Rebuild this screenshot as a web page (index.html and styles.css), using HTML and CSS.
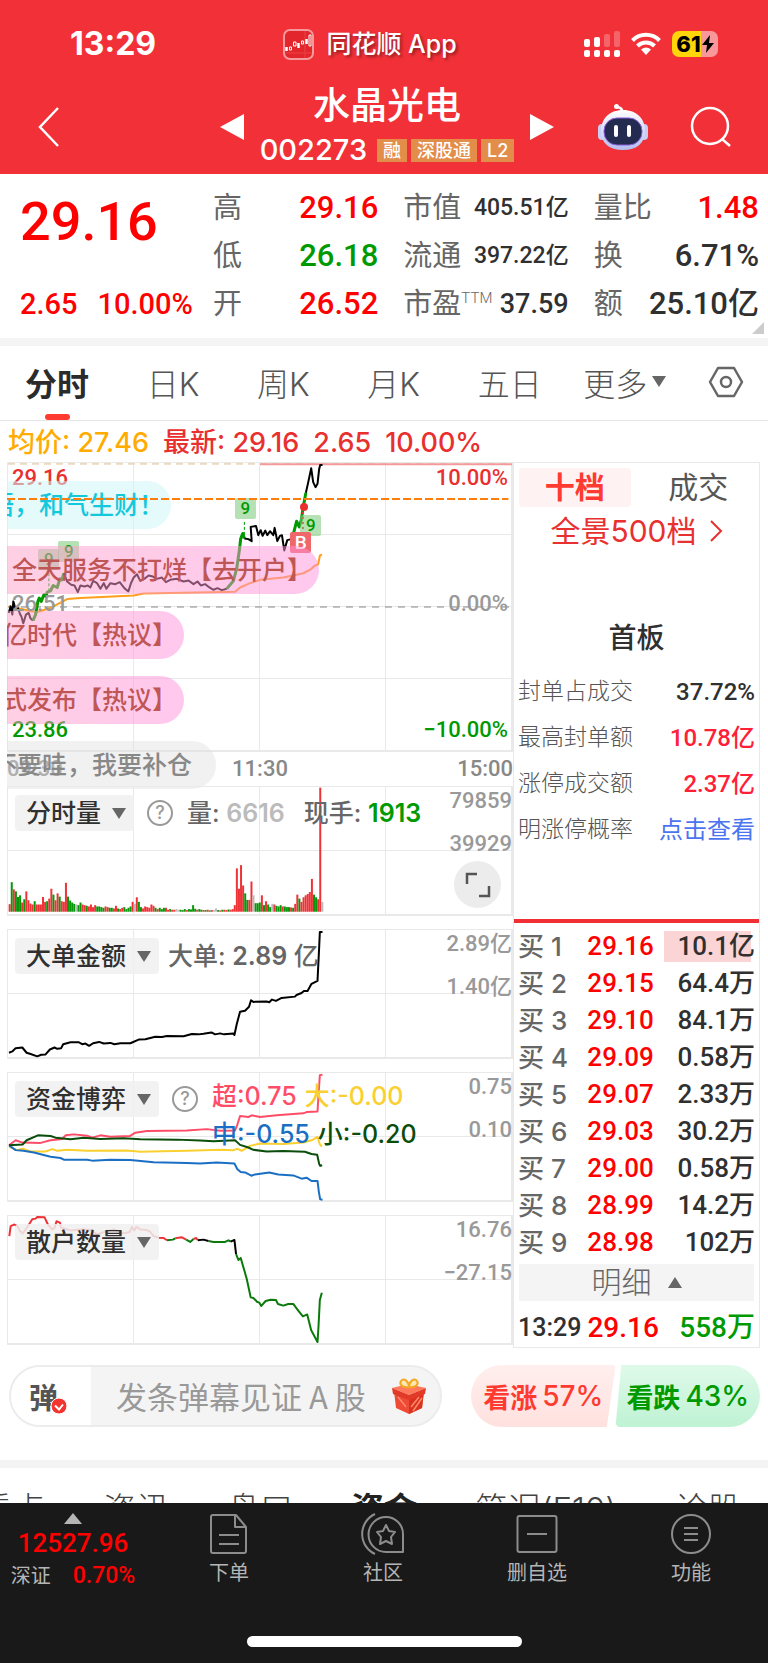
FILE: index.html
```html
<!DOCTYPE html>
<html lang="zh-CN">
<head>
    <meta charset="UTF-8">
    <meta name="viewport" content="width=device-width, initial-scale=1.0">
    <title>水晶光电 002273</title>
    <link rel="stylesheet" href="styles.css">
</head>
<body>

<header class="header">
    <div class="status">
        <span class="clock">13:29</span>
        <div class="app-name">
            <svg width="31" height="31" viewBox="0 0 31 31" fill="none" stroke="#fff">
                <rect x="1" y="1" width="29" height="29" rx="6" fill="#e3262c" stroke="#f59a9c" stroke-width="2"/>
                <path d="M2 24h27M22 2v27" stroke="#ea4448" stroke-width="1"/>
                <path d="M3.500 18v4M15.500 14v5M23.500 10v5" stroke-width="2.500"/>
                <path d="M6.500 18h2v3h-2zM10.500 13h2.500v4h-2.500zM18.500 12h2v3h-2zM26 6h2v11h-2z" stroke-width="1"/>
            </svg>
            <span>同花顺 App</span>
        </div>
        <div class="status-icons">
            <svg width="36" height="26" viewBox="0 0 36 26" fill="#fff">
                <rect x="0" y="8" width="6" height="8" rx="2"/><rect x="10" y="6" width="6" height="10" rx="2"/>
                <g opacity=".25"><rect x="20" y="3" width="6" height="13" rx="2"/><rect x="30" y="0" width="6" height="16" rx="2"/></g>
                <rect x="0" y="19" width="6" height="7" rx="2"/><rect x="10" y="19" width="6" height="7" rx="2"/><rect x="20" y="19" width="6" height="7" rx="2"/><rect x="30" y="19" width="6" height="7" rx="2"/>
            </svg>
            <svg width="30" height="24" viewBox="0 0 30 24" fill="none" stroke="#fff" stroke-width="4">
                <path d="M1.500 8.500a19 19 0 0 1 27 0M6.500 14a12 12 0 0 1 17 0"/>
                <path d="M10 17.500q5-4 10 0L15 23z" fill="#fff" stroke="none"/>
            </svg>
            <div class="battery">61<svg width="12" height="18" viewBox="0 0 12 18"><path d="M8 0L0 10h5L4 18l8-10H7z" fill="#000"/></svg></div>
        </div>
    </div>
    <div class="title-bar">
        <button class="icon-button" aria-label="返回">
            <svg width="22" height="40" viewBox="0 0 22 40" fill="none" stroke="#fff" stroke-width="2.500"><path d="M20 1L2 20l18 19"/></svg>
        </button>
        <button class="icon-button prev" aria-label="上一只">
            <svg width="24" height="26" viewBox="0 0 24 26" fill="#fff"><path d="M0 13L24 0v26z"/></svg>
        </button>
        <div class="stock">
            <h1>水晶光电</h1>
            <div class="stock-code">
                <span>002273</span>
                <em>融</em><em>深股通</em><em>L2</em>
            </div>
        </div>
        <button class="icon-button next" aria-label="下一只">
            <svg width="24" height="26" viewBox="0 0 24 26" fill="#fff"><path d="M24 13L0 0v26z"/></svg>
        </button>
        <button class="icon-button robot" aria-label="助手">
            <svg width="50" height="48" viewBox="0 0 50 48">
                <defs>
                    <linearGradient id="shell" x1="0" y1="0" x2="0" y2="1"><stop offset="0" stop-color="#fff"/><stop offset="1" stop-color="#b4bdf0"/></linearGradient>
                </defs>
                <path d="M24 9q1-4-5-5" fill="none" stroke="#fff" stroke-width="2.500" stroke-linecap="round"/>
                <circle cx="18.500" cy="3.500" r="2.500" fill="#fff"/>
                <rect x="0" y="21" width="8" height="16" rx="4" fill="#c9cef5"/><rect x="42" y="21" width="8" height="16" rx="4" fill="#c9cef5"/>
                <path d="M25 7C39 7 47 16 47 28c0 12-8 19-22 19S3 40 3 28C3 16 11 7 25 7z" fill="url(#shell)"/>
                <rect x="6" y="15" width="38" height="27" rx="13" fill="#232c50" stroke="#8a5bd8" stroke-width="1"/>
                <rect x="16" y="22" width="4" height="12" rx="2" fill="#fff"/><rect x="29" y="22" width="4" height="12" rx="2" fill="#fff"/>
            </svg>
        </button>
        <button class="icon-button" aria-label="搜索">
            <svg width="42" height="42" viewBox="0 0 42 42" fill="none" stroke="#fff" stroke-width="2.500"><circle cx="20" cy="20" r="18"/><path d="M32 33l8 7"/></svg>
        </button>
    </div>
</header>

<section class="quote">
    <div class="price-box">
        <strong class="red">29.16</strong>
        <p class="red"><span>2.65</span><span>10.00%</span></p>
    </div>
    <dl>
        <div><dt>高</dt><dd class="red">29.16</dd></div>
        <div><dt>低</dt><dd class="green">26.18</dd></div>
        <div><dt>开</dt><dd class="red">26.52</dd></div>
    </dl>
    <dl>
        <div><dt>市值</dt><dd class="small">405.51亿</dd></div>
        <div><dt>流通</dt><dd class="small">397.22亿</dd></div>
        <div><dt>市盈<sup>TTM</sup></dt><dd class="mid">37.59</dd></div>
    </dl>
    <dl>
        <div><dt>量比</dt><dd class="red">1.48</dd></div>
        <div><dt>换</dt><dd>6.71%</dd></div>
        <div><dt>额</dt><dd>25.10亿</dd></div>
    </dl>
</section>

<nav class="tabs">
    <button class="active">分时</button>
    <button>日K</button>
    <button>周K</button>
    <button>月K</button>
    <button>五日</button>
    <button class="more">更多<i class="down"></i></button>
    <button class="settings" aria-label="设置">
        <svg width="36" height="32" viewBox="0 0 36 32" fill="none" stroke="#666" stroke-width="2.500"><path d="M10 2h16l8 14-8 14H10L2 16z" stroke-linejoin="round"/><circle cx="18" cy="16" r="5"/></svg>
    </button>
</nav>

<p class="latest"><span class="avg">均价: 27.46</span><span>最新: 29.16</span><span>2.65</span><span>10.00%</span></p>

<main class="board">
    <div class="charts">
        <div class="minute">
            <div class="grid grid-main">
                <svg class="plot" viewBox="22 22 1516 870" preserveAspectRatio="none">
                    <path class="dash-tan" d="M22 24H1538"/>
                    <path class="limit" d="M780 26H1538"/>
                    <path class="dash-grey" d="M22 457H1538"/>
                    <path class="avg-line" d="M24 455L60 462 90 470 110 472 150 460 200 433 240 430 400 422 430 416 550 414 705 411 720 398 750 385 780 375 850 368 880 362 910 355 930 345 945 332 955 328 960 302 966 298"/>
                    <path class="black" d="M24 475L30 455 35 480 38 440 45 465 52 460 58 478 62 485 68 506 76 480 84 475 90 492 97 498"/>
                    <path class="rise" d="M97 498L105 480 112 440 116 430 122 440 130 420 136 425 140 412 150 408 158 392 170 398 178 372 184 375 190 355"/>
                    <path class="black" d="M190 355L200 380 212 390 222 392 232 412 240 392 252 395 262 392 270 398 278 378 290 385 300 402 310 385 318 402 330 385 345 388 358 382 372 400 384 410 392 385 400 368 410 358 420 378 432 372 445 362 458 365 470 372 485 368 497 382 510 375 530 372 550 380 565 377 580 388 592 380 602 392 615 388 628 398 640 405 652 400 665 406 680 402"/>
                    <path class="rise" d="M680 402L700 378 710 340 718 285 722 250 728 235 733 250"/>
                    <path class="black" d="M733 250L745 252 755 258 752 215 768 212 775 240 782 225 788 242 796 226 802 240 810 228 820 240 824 218 832 258 840 242 846 240 853 286 862 255 874 252"/>
                    <path class="rise" d="M874 250L882 230 890 198 898 215 904 195 910 155 918 112"/>
                    <path class="black" d="M918 112L924 85 934 38 940 80 947 95 953 85 958 40 961 28 968 28"/>
                    <path class="stem" d="M145 340V415M733 200V240"/>
                    <path class="stem-red" d="M909 155V225"/>
                </svg>
                <b class="tag tag-a">9</b>
                <b class="tag tag-b">9</b>
                <b class="tag tag-c">9</b>
                <b class="tag tag-d">9</b>
                <b class="tag tag-buy">B</b>
                <i class="dot"></i>
                <div class="axis">
                    <p class="up"><span>29.16</span><span>10.00%</span></p>
                    <p><span>26.51</span><span>0.00%</span></p>
                    <p class="fall"><span>23.86</span><span>−10.00%</span></p>
                </div>
            </div>
            <div class="times"><span>09:30</span><span>11:30</span><span>15:00</span></div>
            <div class="danmu">
                <p class="cyan trim">语，和气生财！</p>
                <p class="trim long">全天服务不打烊【去开户】</p>
                <p class="trim">亿时代【热议】</p>
                <p class="trim">式发布【热议】</p>
                <p class="grey">不要哇，我要补仓</p>
            </div>
            <svg class="plot warn" viewBox="22 22 1516 870" preserveAspectRatio="none"><path class="dash-orange" d="M22 133H1524"/></svg>
        </div>

        <div class="grid panel">
            <svg class="plot" id="volume" viewBox="22 18 1516 390" preserveAspectRatio="none"></svg>
            <div class="legend">
                <button class="picker">分时量<i class="down"></i></button>
                <button class="help" aria-label="说明">?</button>
                <span class="wide">量: <b class="faint">6616</b></span>
                <span>现手: <b class="green">1913</b></span>
            </div>
            <div class="scale"><span>79859</span><span>39929</span></div>
            <button class="expand" aria-label="放大">
                <svg width="26" height="26" viewBox="0 0 26 26" fill="none" stroke="#555" stroke-width="2.500"><path d="M2 12V2h10M24 14v10H14"/></svg>
            </button>
        </div>

        <div class="grid panel">
            <svg class="plot" viewBox="22 448 1516 390" preserveAspectRatio="none">
                <path class="black" d="M25 822L35 818 45 808 65 806 78 822 90 826 110 833 122 828 135 827 148 812 162 806 170 810 182 808 188 796 210 790 235 790 245 796 255 794 266 801 278 793 296 789 310 794 330 792 342 796 360 793 390 793 415 782 435 781 465 773 485 774 500 771 550 772 575 765 595 766 610 764 634 760 645 766 660 763 672 766 700 763 703 768 710 735 720 697 735 694 747 682 753 662 760 667 800 666 808 668 816 660 828 664 845 655 885 651 890 646 905 640 912 634 923 634 935 612 953 603 958 500 960 454 968 454"/>
            </svg>
            <div class="legend">
                <button class="picker">大单金额<i class="down"></i></button>
                <span>大单: <b>2.89</b> 亿</span>
            </div>
            <div class="scale"><span>2.89亿</span><span>1.40亿</span></div>
        </div>

        <div class="grid panel">
            <svg class="plot" viewBox="22 23 1516 390" preserveAspectRatio="none">
                <path class="huge" d="M25 243L45 228 65 235 120 236 150 228 185 224 195 213 220 210 260 214 275 220 300 213 330 217 388 215 405 205 440 200 560 198 620 194 660 199 705 198 712 180 720 154 745 157 755 152 780 157 830 152 910 146 920 142 953 140 956 90 960 30 968 28"/>
                <path class="big" d="M25 248L50 258 66 254 90 262 135 262 155 255 170 260 200 257 260 260 380 259 420 263 560 260 660 257 700 258 712 254 725 260 750 245 780 238 850 239 910 235 935 228 953 218 960 240 966 247"/>
                <path class="medium" d="M25 243L45 258 68 260 100 265 150 278 180 282 190 287 260 287 275 290 330 287 390 288 460 295 560 297 600 299 650 296 703 299 712 316 722 325 735 326 754 336 765 332 808 326 835 332 880 335 905 345 920 342 935 352 953 352 957 385 961 408 968 409"/>
                <path class="little" d="M25 243L66 241 78 228 112 213 150 215 165 220 210 225 250 220 300 224 370 222 420 225 530 226 600 229 640 231 705 228 720 242 745 250 760 257 800 262 850 261 915 263 935 270 952 272 958 300 961 306 967 304"/>
            </svg>
            <div class="legend">
                <button class="picker">资金博弈<i class="down"></i></button>
                <button class="help" aria-label="说明">?</button>
                <div class="flows">
                    <p><span class="c-huge">超:0.75</span><span class="c-big">大:-0.00</span></p>
                    <p><span class="c-medium">中:-0.55</span><span class="c-little">小:-0.20</span></p>
                </div>
            </div>
            <div class="scale"><span>0.75</span><span>0.10</span></div>
        </div>

        <div class="grid panel">
            <svg class="plot" viewBox="22 454 1516 390" preserveAspectRatio="none">
                <path class="retail-up" d="M26 515L30 485 40 480 50 484 58 500 67 507 75 495 85 480 95 464 105 462 110 457 132 458 142 480 155 495 162 490 168 470 178 474 182 490 210 498 240 495 270 497 290 510 320 500 340 495 370 507 388 503 395 487 402 498 408 487 420 495 435 496 448 500 460 515 475 520 490 521 500 528"/>
                <path class="retail-down" d="M500 528L518 526 525 522M558 526L570 533 580 524M625 530L640 533 675 533 685 528 692 532"/>
                <path class="retail-up" d="M525 522L545 519 558 526M580 524L588 521 593 528"/>
                <path class="black" d="M593 528L610 526 625 530M692 532L703 527 708 570"/>
                <path class="retail-down" d="M708 570L715 588 722 582 740 645 752 702 760 704 772 716 778 718 784 728 797 713 812 709 828 710 834 722 850 727 865 722 880 722 895 742 909 760 922 754 934 802 953 838 956 790 960 710 966 688"/>
            </svg>
            <div class="legend">
                <button class="picker">散户数量<i class="down"></i></button>
            </div>
            <div class="scale"><span>16.76</span><span>−27.15</span></div>
        </div>
    </div>

    <aside class="orders">
        <div class="order-tabs"><button class="active">十档</button><button>成交</button></div>
        <a class="full-depth" href="#">全景500档
            <svg width="14" height="22" viewBox="0 0 14 22" fill="none" stroke="#e93030" stroke-width="2"><path d="M2 1l10 10L2 21"/></svg>
        </a>
        <h2>首板</h2>
        <dl class="facts">
            <div><dt>封单占成交</dt><dd>37.72%</dd></div>
            <div><dt>最高封单额</dt><dd class="rose">10.78亿</dd></div>
            <div><dt>涨停成交额</dt><dd class="rose">2.37亿</dd></div>
            <div><dt>明涨停概率</dt><dd><a href="#">点击查看</a></dd></div>
        </dl>
        <table class="bids">
            <tr><th>买 1</th><td class="red">29.16</td><td><span class="hit">10.1亿</span></td></tr>
            <tr><th>买 2</th><td class="red">29.15</td><td>64.4万</td></tr>
            <tr><th>买 3</th><td class="red">29.10</td><td>84.1万</td></tr>
            <tr><th>买 4</th><td class="red">29.09</td><td>0.58万</td></tr>
            <tr><th>买 5</th><td class="red">29.07</td><td>2.33万</td></tr>
            <tr><th>买 6</th><td class="red">29.03</td><td>30.2万</td></tr>
            <tr><th>买 7</th><td class="red">29.00</td><td>0.58万</td></tr>
            <tr><th>买 8</th><td class="red">28.99</td><td>14.2万</td></tr>
            <tr><th>买 9</th><td class="red">28.98</td><td>102万</td></tr>
        </table>
        <button class="detail">明细<i class="upward"></i></button>
        <p class="last-deal"><span>13:29</span><span class="red">29.16</span><span class="green">558万</span></p>
    </aside>
</main>

<section class="comment">
    <div class="comment-box">
        <button class="danmu-switch" aria-label="弹幕开关">弹
            <svg width="18" height="18" viewBox="0 0 18 18"><circle cx="9" cy="9" r="8" fill="#f2352f" stroke="#fff"/><path d="M5 8.500l4 4 4-5" fill="none" stroke="#fff" stroke-width="2"/></svg>
        </button>
        <input type="text" placeholder="发条弹幕见证 A 股" aria-label="发条弹幕">
        <svg class="gift" width="36" height="38" viewBox="0 0 36 38">
            <path d="M3 14l15 5 15-5-2 17-13 6-13-6z" fill="#ee4a35"/>
            <path d="M18 19l15-5-2 17-13 6z" fill="#d8331f"/>
            <path d="M1 11l16-4 18 4-17 7z" fill="#ff7a5c"/>
            <path d="M1 11l17 7v5L2 17zM35 11l-17 7v5l16-6z" fill="#e23a28"/>
            <path d="M22 34l9-13M20 30l8-10M7 20l8 10" stroke="#ff8a6b" stroke-width="1.500"/>
            <path d="M18 10C11 11 8 7 10 4c3-4 8 1 8 6 0-5 5-10 8-6 2 3-1 7-8 6z" fill="#ffe9b0" stroke="#f5a623" stroke-width="2"/>
        </svg>
    </div>
    <div class="vote">
        <button class="vote-up">看涨 <b>57%</b></button>
        <button class="vote-down">看跌 <b>43%</b></button>
    </div>
</section>

<nav class="sections">
    <a href="#">看点</a><a href="#">资讯</a><a href="#">盘口</a><a href="#" class="active">资金</a><a href="#">简况(F10)</a><a href="#">诊股</a>
</nav>

<footer class="dock">
    <div class="dock-row">
        <button class="index">
            <i class="upward"></i>
            <strong>12527.96</strong>
            <span>深证 <b>0.70%</b></span>
        </button>
        <button>
            <svg width="40" height="42" viewBox="0 0 40 42"><path d="M2 4q0-2 2-2h23l10 12v24q0 2-2 2H4q-2 0-2-2zM26 2v12h11M10 22h20M10 31h20"/></svg>
            下单
        </button>
        <button>
            <svg width="44" height="42" viewBox="0 0 44 42"><path d="M25 4a17 17 0 0 1 17 17v18H25a17.500 17.500 0 0 1 0-35zM14 1a22 22 0 0 0 0 40M25 12l3 6 6 1-4 5 1 7-6-3-6 3 1-7-4-5 6-1z"/></svg>
            社区
        </button>
        <button>
            <svg width="42" height="42" viewBox="0 0 42 42"><rect x="1.500" y="3" width="39" height="36" rx="2"/><path d="M11 21h20"/></svg>
            删自选
        </button>
        <button>
            <svg width="42" height="42" viewBox="0 0 42 42"><circle cx="21" cy="21" r="19"/><path d="M14 15h14M14 21h14M14 27h14"/></svg>
            功能
        </button>
    </div>
    <i class="home-bar"></i>
</footer>

<script>
    // one bar per minute: r = up, g = down, a = flat, then the bar height
    const bars = "r23 g90 r68 g62 g45 g50 r28 g38 r62 r35 r25 r22 g32 r22 r22 r22 r45 r30 g32 r40 r70 g52 r35 r56 g46 r32 r30 r88 g46 g34 g28 g24 a22 g20 g28 r22 r20 g18 r16 r22 r14 r20 g16 g16 g14 g12 r16 r14 g12 g12 r10 r18 g10 r8 r12 g14 g8 g12 g16 r30 a24 r44 g30 g14 r10 r16 r14 r12 r22 r18 g12 r8 g12 g8 g12 r12 r6 g8 r6 r6 a8 a6 g6 g5 g8 r5 g8 g7 g20 g9 r6 g8 g6 r5 g5 r6 g4 r5 a5 a10 g5 r4 g6 r6 r5 g7 r6 r8 r20 r132 r70 r142 r80 g56 g36 r36 r92 a50 g26 g26 g28 r50 g20 r32 g22 g14 a24 r22 g18 g16 g20 r16 g16 g14 g14 r13 g12 r24 r52 g40 r30 r44 r50 r54 r60 r100 g52 g44 r38 r378 a30".split(" ");
    const colors = { r: "#ee3338", g: "#0a960a", a: "#bbbbbb" };
    const volume = document.getElementById("volume");

    bars.forEach((bar, i) => {
        const height = Number(bar.slice(1));
        const rect = document.createElementNS("http://www.w3.org/2000/svg", "rect");
        rect.setAttribute("x", 24 + i * 6.27);
        rect.setAttribute("y", 398 - height);
        rect.setAttribute("width", 6);
        rect.setAttribute("height", height);
        rect.setAttribute("fill", colors[bar[0]]);
        volume.appendChild(rect);
    });
</script>

</body>
</html>
```
FILE: styles.css
```css
* { box-sizing: border-box; }
body { margin: 0; font-family: Inter, "Noto Sans CJK SC", sans-serif; color: #303030; background: #fff; overflow-x: hidden; }
button { font: inherit; color: inherit; background: none; border: none; padding: 0; cursor: pointer; }
h1, h2, p, dl, dd { margin: 0; }
a { text-decoration: none; color: inherit; }
i, em { font-style: normal; }
svg { display: block; flex: none; }
.red { color: #ff0000; }
.green { color: #009a00; }

/* header */
.header { background: #f23038; color: #fff; height: 174px; }
.status { display: flex; justify-content: space-between; align-items: center; height: 82px; padding: 6px 50px 0 70px; }
.clock { font-size: 32px; font-weight: 700; line-height: 36px; }
.app-name { display: flex; align-items: center; gap: 12px; font-size: 25px; font-weight: 500; line-height: 36px; text-shadow: 2px 2px 3px rgba(0, 0, 0, 0.4); }
.status-icons { display: flex; align-items: center; gap: 11px; }
.battery { display: flex; align-items: center; justify-content: center; gap: 1px; width: 46px; height: 26px; border-radius: 7px; background: linear-gradient(to right, #ffd60a 62%, #f9989b 62%); color: #000; font-size: 22px; font-weight: 800; }
.title-bar { display: flex; align-items: center; height: 90px; padding: 0 36px 0 38px; }
.stock { flex: 1; text-align: center; }
.stock h1 { font-size: 37px; font-weight: 500; line-height: 46px; }
.stock-code { display: flex; align-items: center; justify-content: center; gap: 4px; font-size: 29px; font-weight: 500; line-height: 42px; white-space: nowrap; }
.stock-code span { margin-right: 6px; }
.stock-code em { background: #e38d4a; font-size: 18px; line-height: 23px; padding: 0 6px; }
.icon-button { flex: none; }
.prev { margin-left: 160px; }
.next { margin-right: 44px; }
.robot { margin-right: 42px; }

/* quote */
.quote { position: relative; display: grid; grid-template-columns: 168px 1fr 1fr 1fr; column-gap: 25px; height: 172px; padding: 10px 9px 0 20px; border-bottom: 8px solid #f4f4f4; font-family: Roboto, "Noto Sans CJK SC", sans-serif; }
.quote::after { content: ""; position: absolute; right: 4px; bottom: 4px; border: 6px solid transparent; border-right-color: #ccc; border-bottom-color: #ccc; }
.price-box strong { display: block; font-size: 54px; font-weight: 500; line-height: 76px; }
.price-box p { display: flex; gap: 20px; font-size: 29px; font-weight: 500; line-height: 48px; margin-top: 20px; white-space: nowrap; }
.quote dl div { display: flex; justify-content: space-between; height: 48px; line-height: 48px; }
.quote dt { font-size: 29px; color: #666; white-space: nowrap; }
.quote dd { font-size: 31px; font-weight: 500; white-space: nowrap; }
.quote .small { font-size: 23px; }
.quote .mid { font-size: 27px; }
.quote sup { font-size: 15px; font-weight: 300; line-height: 16px; }

.down { display: inline-block; border: 7px solid transparent; border-top: 11px solid #666; border-bottom: 0; }
.upward { display: inline-block; border: 7px solid transparent; border-bottom: 11px solid #666; border-top: 0; }

/* period tabs */
.tabs { display: flex; justify-content: space-between; height: 75px; padding: 0 24px 0 25px; border-bottom: 1px solid #e6e6e6; font-size: 32px; font-weight: 300; color: #555; }
.tabs button { display: flex; align-items: center; gap: 5px; position: relative; padding-bottom: 3px; }
.tabs .more, .tabs .settings { margin-left: -16px; }
.tabs .active { font-weight: 700; color: #2b2b2b; }
.tabs .active::after { content: ""; position: absolute; left: 20px; bottom: 0; width: 25px; height: 6px; border-radius: 3px; background: #ff3a30; }

.latest { display: flex; gap: 14px; height: 41px; padding-left: 8px; font-size: 27px; font-weight: 500; line-height: 43px; color: #e93030; }
.latest .avg { color: #ffab00; }

/* charts */
.board { display: grid; grid-template-columns: 506fr 247fr; padding: 0 8px 0 7px; }
.charts { display: flex; flex-direction: column; gap: 13px; min-width: 0; }
.minute { position: relative; margin-bottom: -13px; }
.grid { position: relative; border: 1px solid #e9e9e9; background-image: linear-gradient(to right, transparent calc(100% - 1px), #e9e9e9 0), linear-gradient(to bottom, transparent calc(100% - 1px), #e9e9e9 0); background-size: 25% 100%, 100% 50%; }
.grid-main { height: 290px; background-size: 25% 100%, 100% 25%; }
.panel { height: 130px; }
.plot { position: absolute; left: 0; top: 0; width: 100%; height: 100%; }
.plot path { fill: none; stroke-width: 2px; vector-effect: non-scaling-stroke; stroke-linejoin: round; }
.plot .black { stroke: #000; }
.plot .rise { stroke: #009a00; stroke-width: 3px; }
.plot .avg-line { stroke: #ff9d1e; }
.plot .limit { stroke: #f59a9c; }
.plot .dash-tan { stroke: #ecd9bd; stroke-dasharray: 7 5; }
.plot .dash-grey { stroke: #888; stroke-width: 1px; stroke-dasharray: 7 6; }
.plot .dash-orange { stroke: #ff7d0a; stroke-dasharray: 8 3; }
.plot .stem { stroke: #009a00; stroke-width: 1px; stroke-dasharray: 3 2; }
.plot .stem-red { stroke: #e93030; stroke-dasharray: 2 3; }
.plot .huge { stroke: #ff4d68; }
.plot .big { stroke: #f9d02f; }
.plot .medium { stroke: #1a6fc4; }
.plot .little { stroke: #0b4d0b; }
.plot .retail-up { stroke: #ee3338; }
.plot .retail-down { stroke: #0a7a0a; }
.minute .warn { height: 290px; }

.tag { position: absolute; width: 21px; height: 21px; border-radius: 2px; background: rgba(120, 200, 120, 0.55); color: #009a00; font: 500 17px/21px Roboto, sans-serif; text-align: center; }
.tag-a { left: 6%; top: 30%; }
.tag-b { left: 10%; top: 27%; }
.tag-c { left: 45%; top: 12%; }
.tag-d { left: 58%; top: 18%; }
.tag-buy { left: 56%; top: 24%; background: #f0676b; color: #fff; font-size: 19px; }
.dot { position: absolute; left: 58%; top: 14%; width: 8px; height: 8px; border-radius: 50%; background: #e93030; }

.axis { position: absolute; left: 4px; right: 4px; top: 0; bottom: 6px; display: flex; flex-direction: column; justify-content: space-between; font: 500 22px/30px Roboto, sans-serif; color: #999; }
.axis p { display: flex; justify-content: space-between; }
.axis .up { color: #e93030; }
.axis .fall { color: #009a00; }
.times { display: flex; justify-content: space-between; height: 34px; font: 500 22px/34px Roboto, sans-serif; color: #888; }
.danmu { position: absolute; left: 0; right: 0; top: 19px; display: flex; flex-direction: column; align-items: flex-start; gap: 17px; overflow: hidden; }
.danmu p { display: flex; justify-content: flex-end; max-width: 100%; height: 48px; padding: 0 24px 0 0; margin-left: -5px; border-radius: 0 24px 24px 0; background: linear-gradient(to right, rgba(255, 160, 200, 0.5), rgba(255, 145, 220, 0.5)); color: #bf5656; font-size: 25px; font-weight: 500; line-height: 48px; white-space: nowrap; }
.danmu .trim { padding-right: 7px; }
.danmu .long { margin-left: 0; padding-left: 5px; }
.danmu .cyan { margin-left: -18px; background: rgba(205, 245, 247, 0.55); color: #14c8dc; }
.danmu .grey { margin-left: -15px; background: rgba(225, 225, 225, 0.45); color: #888; }

.legend { position: absolute; left: 7px; top: 8px; display: flex; align-items: flex-start; gap: 9px; font-size: 25px; font-weight: 500; line-height: 36px; color: #666; white-space: nowrap; }
.legend b { font-weight: 600; }
.picker { display: flex; align-items: center; gap: 11px; height: 36px; padding: 0 8px 0 11px; border-radius: 4px; background: rgba(240, 240, 240, 0.85); color: #303030; }
.help { width: 26px; height: 26px; margin: 5px 5px 0 4px; border: 2px solid #999; border-radius: 50%; color: #999; font-size: 18px; line-height: 20px; }
.legend .wide { margin-right: 10px; }
.legend .faint { color: #bbb; }
.flows { line-height: 38px; margin-top: -4px; }
.flows p { display: flex; gap: 8px; }
.c-huge { color: #ff4d68; }
.c-big { color: #f9d02f; }
.c-medium { color: #1a6fc4; }
.c-little { color: #0b4d0b; }
.scale { position: absolute; right: 0; top: -8px; display: flex; flex-direction: column; font: 500 22px/43px Roboto, "Noto Sans CJK SC", sans-serif; color: #999; text-align: right; }
.expand { position: absolute; right: 11px; bottom: 7px; display: grid; place-items: center; width: 47px; height: 47px; border-radius: 50%; background: #ececec; }

/* order book */
.orders { border: 1px solid #e9e9e9; padding: 5px 0 0; font-family: Roboto, "Noto Sans CJK SC", sans-serif; }
.order-tabs { display: grid; grid-template-columns: 1fr 1fr; gap: 12px; padding: 0 5px; font-size: 30px; line-height: 39px; color: #555; }
.order-tabs .active { background: #fff2f2; border-radius: 4px; color: #ff3a30; font-weight: 700; }
.full-depth { display: flex; align-items: center; justify-content: center; gap: 12px; color: #e93030; font-family: Inter, "Noto Sans CJK SC", sans-serif; font-size: 30px; line-height: 48px; }
.orders h2 { margin-top: 64px; font-size: 28px; font-weight: 500; line-height: 40px; text-align: center; }
.facts { height: 264px; padding: 10px 4px 0 4px; border-bottom: 4px solid #f03035; }
.facts div { display: flex; justify-content: space-between; line-height: 46px; }
.facts dt { font-size: 23px; font-weight: 300; color: #555; }
.facts dd { font-size: 24px; font-weight: 500; }
.facts .rose { color: #ff2038; }
.facts a { color: #4a74f0; font-weight: 400; }
.bids { width: 100%; margin-top: 5px; padding: 0 4px; border-spacing: 0; font-size: 26px; line-height: 37px; }
.bids th { padding: 0; font-family: Inter, "Noto Sans CJK SC", sans-serif; font-weight: 500; color: #666; text-align: left; }
.bids td { padding: 0; font-weight: 500; text-align: right; }
.bids td:nth-child(2) { padding-left: 12px; text-align: center; }
.hit { display: inline-block; padding-left: 13px; line-height: 31px; background: linear-gradient(#fbd4d6, #fbd4d6) no-repeat 0 0 / calc(100% - 4px) 100%; }
.detail { display: flex; align-items: center; justify-content: center; gap: 16px; width: calc(100% - 10px); height: 37px; margin: 3px 5px 0; background: #f4f4f4; color: #666; font-size: 30px; font-weight: 300; line-height: 37px; }
.last-deal { display: flex; gap: 6px; align-items: center; height: 38px; margin-top: 8px; padding: 0 4px; font-size: 28px; font-weight: 500; line-height: 38px; }
.last-deal span:first-child { font-size: 25px; }
.last-deal .green { margin-left: auto; }

/* comment bar */
.comment { display: flex; justify-content: space-between; height: 120px; padding: 17px 8px 0 9px; border-bottom: 8px solid #f4f4f4; }
.comment-box { display: flex; align-items: center; width: 433px; height: 62px; padding-right: 13px; border: 2px solid #ececec; border-radius: 31px; background: #f4f4f4; overflow: hidden; }
.danmu-switch { position: relative; flex: none; width: 80px; height: 58px; background: #fff; color: #555; font-size: 29px; font-weight: 700; text-align: left; padding-left: 18px; }
.danmu-switch svg { position: absolute; left: 39px; bottom: 10px; }
.comment-box input { flex: 1; min-width: 0; padding: 0 0 0 25px; border: none; background: none; font: 400 31px/44px "Noto Sans CJK SC", sans-serif; }
.comment-box input::placeholder { color: #999; }
.vote { display: flex; width: 289px; height: 62px; font-size: 27px; font-weight: 700; }
.vote button { flex: 1; display: flex; align-items: center; justify-content: center; gap: 5px; }
.vote b { font-size: 28px; font-weight: 500; }
.vote-up { background: linear-gradient(#ffefee, #ffe1df); color: #ff3a30; border-radius: 31px 4px 4px 31px; clip-path: polygon(0 0, 100% 0, 94% 100%, 0 100%); }
.vote-down { background: linear-gradient(#dffaea, #bff2d3); color: #009a00; border-radius: 4px 31px 31px 4px; clip-path: polygon(4% 0, 100% 0, 100% 100%, 0 100%); }

.sections { display: flex; gap: 58px; height: 197px; padding-top: 18px; margin-left: -21px; font-size: 33px; line-height: 46px; font-weight: 300; color: #444; white-space: nowrap; overflow: hidden; }
.sections .active { font-weight: 700; color: #222; }

/* dock */
.dock { position: fixed; left: 0; right: 0; bottom: 0; height: 160px; background: #191919; color: #b5b5b5; }
.dock-row { display: grid; grid-template-columns: 152px 1fr 1fr 1fr 1fr; height: 92px; }
.dock button { display: flex; flex-direction: column; align-items: center; padding-top: 10px; gap: 3px; font-size: 20px; line-height: 30px; }
.dock svg { fill: none; stroke: #8c8c8c; stroke-width: 2px; stroke-linejoin: round; }
.dock .index { gap: 0; padding-right: 6px; font-family: Roboto, "Noto Sans CJK SC", sans-serif; }
.dock .index .upward { border-width: 0 9px 11px; border-bottom-color: #b5b5b5; }
.index strong { font-size: 26px; font-weight: 500; line-height: 38px; color: #ff0000; }
.index span { display: flex; gap: 22px; line-height: 28px; }
.index b { font-size: 23px; font-weight: 500; color: #ff0000; }
.home-bar { display: block; width: 275px; height: 11px; margin: 41px auto 0; border-radius: 6px; background: #fff; }
```
